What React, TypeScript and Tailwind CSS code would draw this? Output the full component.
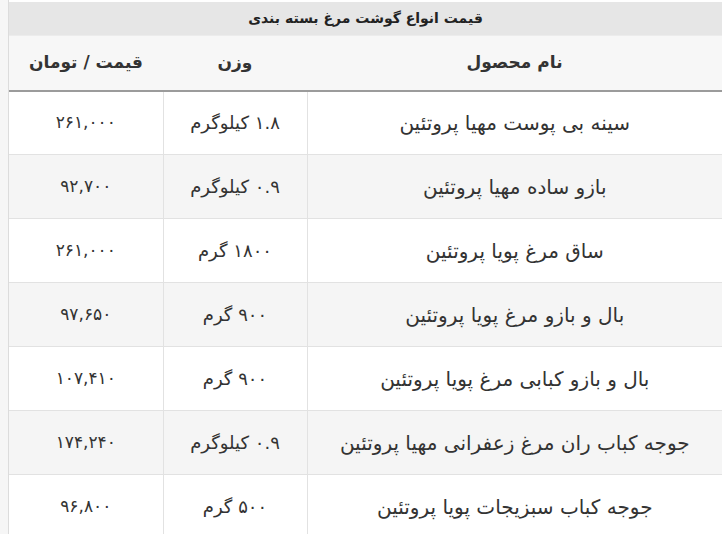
const rows = [
  { name: "سینه بی پوست مهیا پروتئین", weight: "۱.۸ کیلوگرم", price: "۲۶۱,۰۰۰" },
  { name: "بازو ساده مهیا پروتئین", weight: "۰.۹ کیلوگرم", price: "۹۲,۷۰۰" },
  { name: "ساق مرغ پویا پروتئین", weight: "۱۸۰۰ گرم", price: "۲۶۱,۰۰۰" },
  { name: "بال و بازو مرغ پویا پروتئین", weight: "۹۰۰ گرم", price: "۹۷,۶۵۰" },
  { name: "بال و بازو کبابی مرغ پویا پروتئین", weight: "۹۰۰ گرم", price: "۱۰۷,۴۱۰" },
  { name: "جوجه کباب ران مرغ زعفرانی مهیا پروتئین", weight: "۰.۹ کیلوگرم", price: "۱۷۴,۲۴۰" },
  { name: "جوجه کباب سبزیجات پویا پروتئین", weight: "۵۰۰ گرم", price: "۹۶,۸۰۰" },
]

export default function App() {
  return (
    <div className="flex h-[534px] w-[722px] overflow-hidden bg-white font-['DejaVu_Sans',sans-serif] text-[#333]">
      {/* side strip */}
      <div className="w-[9px] shrink-0 border-r border-[#dcdcdc] bg-[#f6f6f6]" />

      <div className="flex-1 pt-[2px]" dir="rtl">
        <div className="flex h-[33px] items-center justify-center bg-[#e6e6e6] text-[14px] font-bold text-[#222]">
          قیمت انواع گوشت مرغ بسته بندی
        </div>

        <table className="w-full border-collapse">
          <thead>
            <tr className="h-[55px] border-t border-[#ececec] border-b-2 border-b-[#9b9b9b] bg-[#f7f7f7] text-[17px] font-bold text-[#333]">
              <th className="w-[415px] text-center">نام محصول</th>
              <th className="w-[144px] text-center">وزن</th>
              <th className="text-center">قیمت / تومان</th>
            </tr>
          </thead>
          <tbody>
            {rows.map((r, i) => (
              <tr key={i} className={`h-[64px] border-b border-[#e2e2e2] ${i % 2 === 1 ? "bg-[#f5f5f5]" : "bg-white"}`}>
                <td className="border-l border-[#e2e2e2] text-center text-[20px]">{r.name}</td>
                <td className="border-l border-[#e2e2e2] text-center text-[18px]">{r.weight}</td>
                <td className="text-center text-[17px]">{r.price}</td>
              </tr>
            ))}
          </tbody>
        </table>
      </div>
    </div>
  )
}
